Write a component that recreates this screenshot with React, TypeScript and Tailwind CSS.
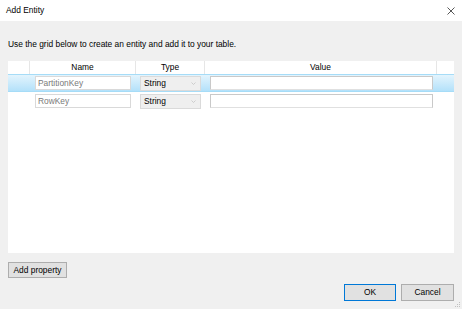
import React from "react";

const font = { fontFamily: '"Liberation Sans", Arial, sans-serif' };

function Chevron() {
  return (
    <svg width="5" height="3" viewBox="0 0 5 3" className="shrink-0">
      <path d="M0.5 0.5 L2.5 2.5 L4.5 0.5" fill="none" stroke="#c4c4c4" strokeWidth="0.8" />
    </svg>
  );
}

function Row({ name, selected }: { name: string; selected?: boolean }) {
  const bg = selected
    ? "bg-gradient-to-b from-[#e3f4fd] to-[#b3e1fa] border-y border-[#a6dcf7]"
    : "border-y border-transparent";
  return (
    <div className={`flex h-[18px] items-center ${bg}`}>
      <div className="w-[22px] h-full" />
      <div className="w-[106px] h-full flex items-center pl-[5px] pr-[5px]">
        <div className="w-full h-[14px] bg-white border border-[#d9d9d9] flex items-center pl-[2px] text-[8.4px] text-[#7a7a7a] leading-none">
          {name}
        </div>
      </div>
      <div className="w-[69px] h-full flex items-center pl-[4px] pr-[4px]">
        <div className="w-full h-[15px] bg-[#efefef] border border-[#dadada] flex items-center justify-between pl-[3px] pr-[4px] text-[8.4px] text-black leading-none">
          <span>String</span>
          <Chevron />
        </div>
      </div>
      <div className="w-[232px] h-full flex items-center pl-[5px] pr-[4px]">
        <div className="w-full h-[14px] bg-white border border-[#c9c9c9] border-b-[#e0e0e0]" />
      </div>
      <div className="flex-1 h-full" />
    </div>
  );
}

export default function App() {
  return (
    <div className="w-[462px] h-[309px] bg-[#f0f0f0] flex flex-col text-black relative overflow-hidden" style={font}>
      <div className="h-[21px] bg-white flex items-center justify-between pl-[6px] pr-[7px] shrink-0">
        <span className="text-[8.4px] leading-none">Add Entity</span>
        <svg width="8" height="8" viewBox="0 0 8 8">
          <path d="M0.5 0.5 L7.5 7.5 M7.5 0.5 L0.5 7.5" stroke="#444" strokeWidth="0.9" />
        </svg>
      </div>
      <div className="pl-[8px] pt-[18px] h-[40px] shrink-0 text-[8.4px] leading-[10px]">
        Use the grid below to create an entity and add it to your table.
      </div>
      <div className="mx-[8px] h-[192px] bg-white flex flex-col shrink-0">
        <div className="flex h-[13px] text-[8.4px] leading-none items-center">
          <div className="w-[22px] h-full border-r border-[#e6e6e6]" />
          <div className="w-[106px] h-full border-r border-[#e6e6e6] flex items-center justify-center">Name</div>
          <div className="w-[69px] h-full border-r border-[#e6e6e6] flex items-center justify-center">Type</div>
          <div className="w-[232px] h-full border-r border-[#e6e6e6] flex items-center justify-center">Value</div>
          <div className="flex-1 h-full" />
        </div>
        <Row name="PartitionKey" selected />
        <Row name="RowKey" />
      </div>
      <div className="pl-[8px] pt-[9px] shrink-0">
        <button className="h-[16px] w-[59px] bg-[#e1e1e1] border border-[#adadad] text-[8.4px] leading-none flex items-center justify-center">
          Add property
        </button>
      </div>
      <div className="flex justify-end gap-[5px] pr-[8px] pt-[6px] shrink-0">
        <button className="h-[17px] w-[52px] bg-[#e1e1e1] border border-[#0078d7] text-[8.4px] leading-none flex items-center justify-center">
          OK
        </button>
        <button className="h-[17px] w-[53px] bg-[#e1e1e1] border border-[#adadad] text-[8.4px] leading-none flex items-center justify-center">
          Cancel
        </button>
      </div>
      <svg className="absolute right-[1px] bottom-[1px]" width="6" height="6" viewBox="0 0 6 6">
        <rect x="4" y="0" width="1" height="1" fill="#c0c0c0" />
        <rect x="2" y="2" width="1" height="1" fill="#c0c0c0" />
        <rect x="4" y="2" width="1" height="1" fill="#c0c0c0" />
        <rect x="0" y="4" width="1" height="1" fill="#c0c0c0" />
        <rect x="2" y="4" width="1" height="1" fill="#c0c0c0" />
        <rect x="4" y="4" width="1" height="1" fill="#c0c0c0" />
      </svg>
    </div>
  );
}
